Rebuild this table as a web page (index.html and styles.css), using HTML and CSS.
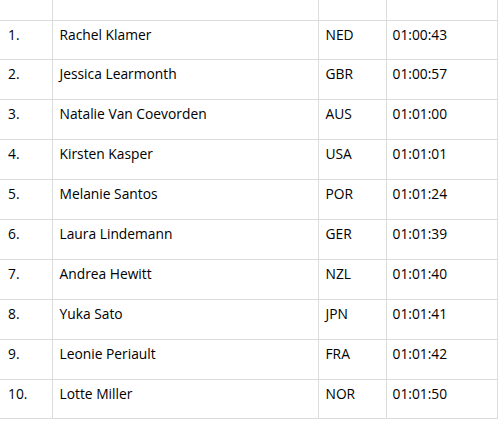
FILE: index.html
```html
<!DOCTYPE html>
<html>
<head>
<meta charset="utf-8">
<link rel="stylesheet" href="styles.css">
</head>
<body>
<table class="results">
  <tr class="head"><td></td><td></td><td></td><td></td></tr>
  <tr><td>1.</td><td>Rachel Klamer</td><td>NED</td><td>01:00:43</td></tr>
  <tr><td>2.</td><td>Jessica Learmonth</td><td>GBR</td><td>01:00:57</td></tr>
  <tr><td>3.</td><td>Natalie Van Coevorden</td><td>AUS</td><td>01:01:00</td></tr>
  <tr><td>4.</td><td>Kirsten Kasper</td><td>USA</td><td>01:01:01</td></tr>
  <tr><td>5.</td><td>Melanie Santos</td><td>POR</td><td>01:01:24</td></tr>
  <tr><td>6.</td><td>Laura Lindemann</td><td>GER</td><td>01:01:39</td></tr>
  <tr><td>7.</td><td>Andrea Hewitt</td><td>NZL</td><td>01:01:40</td></tr>
  <tr><td>8.</td><td>Yuka Sato</td><td>JPN</td><td>01:01:41</td></tr>
  <tr><td>9.</td><td>Leonie Periault</td><td>FRA</td><td>01:01:42</td></tr>
  <tr><td>10.</td><td>Lotte Miller</td><td>NOR</td><td>01:01:50</td></tr>
</table>
</body>
</html>
```
FILE: styles.css
```css
html, body {
  margin: 0;
  padding: 0;
  background: #ffffff;
}
.results {
  border-collapse: collapse;
  table-layout: fixed;
  width: 497px;
  font-family: "Open Sans", "Noto Sans", sans-serif;
  font-size: 13.8px;
  color: #000000;
}
.results td {
  height: 39.9px;
  box-sizing: border-box;
  padding: 4px 0 0 7px;
  vertical-align: top;
  border: 1px solid #dcdcdc;
  border-left: none;
  white-space: nowrap;
}
.results td:nth-child(1) { width: 52px; padding-left: 8px; }
.results td:nth-child(2) { width: 266px; }
.results td:nth-child(3) { width: 68px; }
.results td:nth-child(4) { width: 111px; padding-left: 6px; }
.results td:nth-child(2),
.results td:nth-child(3),
.results td:nth-child(4) { border-left: 1px solid #dcdcdc; }
.results tr.head td {
  height: 20px;
  border-top: none;
  padding: 0;
}
```
